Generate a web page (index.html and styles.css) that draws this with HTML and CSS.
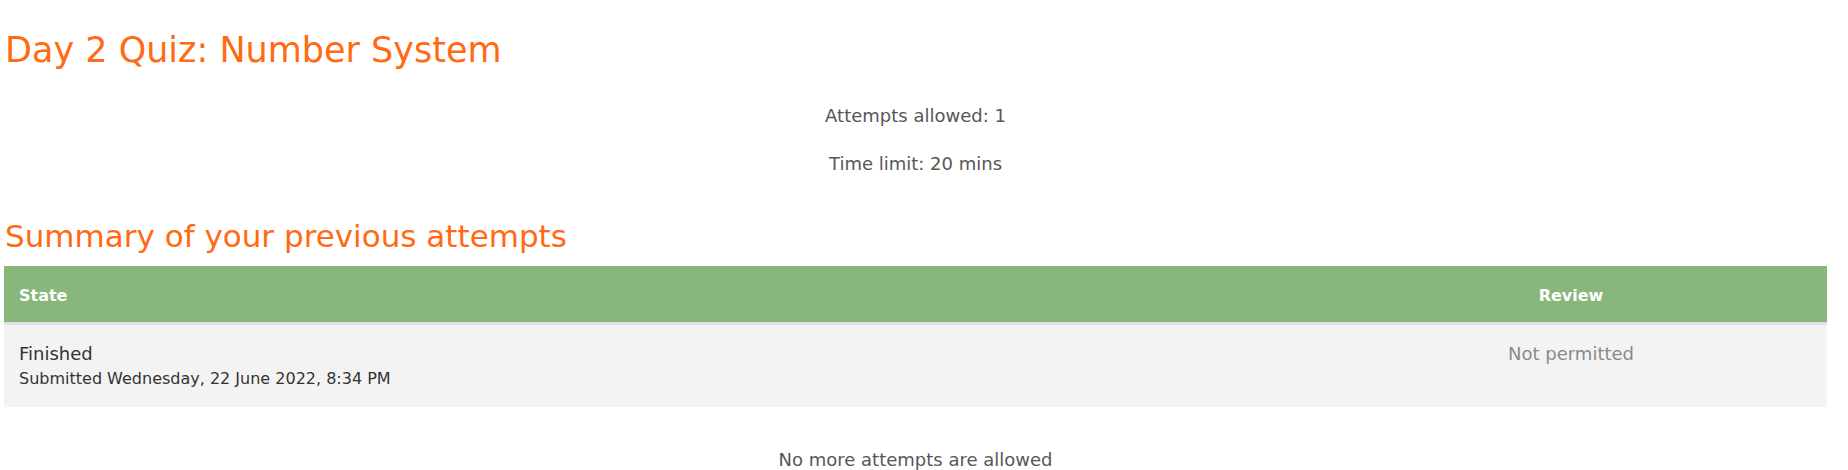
FILE: index.html
```html
<!DOCTYPE html>
<html lang="en">
<head>
<meta charset="utf-8">
<title>Day 2 Quiz: Number System</title>
<link rel="stylesheet" href="styles.css">
</head>
<body>
<div class="page">
  <h2 class="quiz-title">Day 2 Quiz: Number System</h2>
  <div class="quizinfo">
    <p>Attempts allowed: 1</p>
    <p>Time limit: 20 mins</p>
  </div>
  <h3 class="summary-title">Summary of your previous attempts</h3>
  <table class="attempts">
    <thead>
      <tr>
        <th class="col-state">State</th>
        <th class="col-review">Review</th>
      </tr>
    </thead>
    <tbody>
      <tr>
        <td class="col-state">
          <div class="state">Finished</div>
          <div class="submitted">Submitted Wednesday, 22 June 2022, 8:34 PM</div>
        </td>
        <td class="col-review"><span class="muted">Not permitted</span></td>
      </tr>
    </tbody>
  </table>
  <p class="no-more">No more attempts are allowed</p>
</div>
</body>
</html>
```

FILE: styles.css
```css
html, body {
  margin: 0;
  padding: 0;
  background: #ffffff;
}
body {
  font-family: "DejaVu Sans", "Noto Sans", sans-serif;
  color: #575757;
  overflow: hidden;
}
.page {
  width: 1823px;
  padding-left: 4px;
}
.quiz-title {
  margin: 0;
  padding-top: 28px;
  padding-left: 1px;
  font-size: 35px;
  line-height: 44px;
  font-weight: normal;
  color: #ff6a13;
}
.quizinfo {
  text-align: center;
  padding-top: 32px;
}
.quizinfo p {
  margin: 0 0 24px 0;
  font-size: 18px;
  line-height: 24px;
}
.summary-title {
  margin: 0;
  padding-top: 17px;
  padding-left: 1px;
  font-size: 31px;
  line-height: 38px;
  font-weight: normal;
  color: #ff6a13;
}
.attempts {
  width: 100%;
  border-collapse: collapse;
  margin-top: 11px;
}
.attempts th {
  background: #88b77b;
  color: #ffffff;
  font-weight: bold;
  font-size: 16px;
  line-height: 20px;
  height: 53px;
  padding: 3px 15px 0;
  border-bottom: 3px solid #dde1e6;
  vertical-align: middle;
}
.attempts th.col-state { text-align: left; }
.attempts th.col-review,
.attempts td.col-review {
  text-align: center;
  width: 482px;
}
.attempts td {
  background: #f3f3f3;
  vertical-align: top;
  padding: 17px 15px 16px;
}
.state {
  font-size: 18px;
  line-height: 24px;
  color: #333333;
}
.submitted {
  font-size: 16px;
  line-height: 25px;
  color: #333333;
}
.muted {
  display: block;
  font-size: 18px;
  line-height: 24px;
  color: #8a8a8a;
}
.no-more {
  margin: 0;
  padding-top: 41px;
  text-align: center;
  font-size: 18px;
  line-height: 24px;
}
```
